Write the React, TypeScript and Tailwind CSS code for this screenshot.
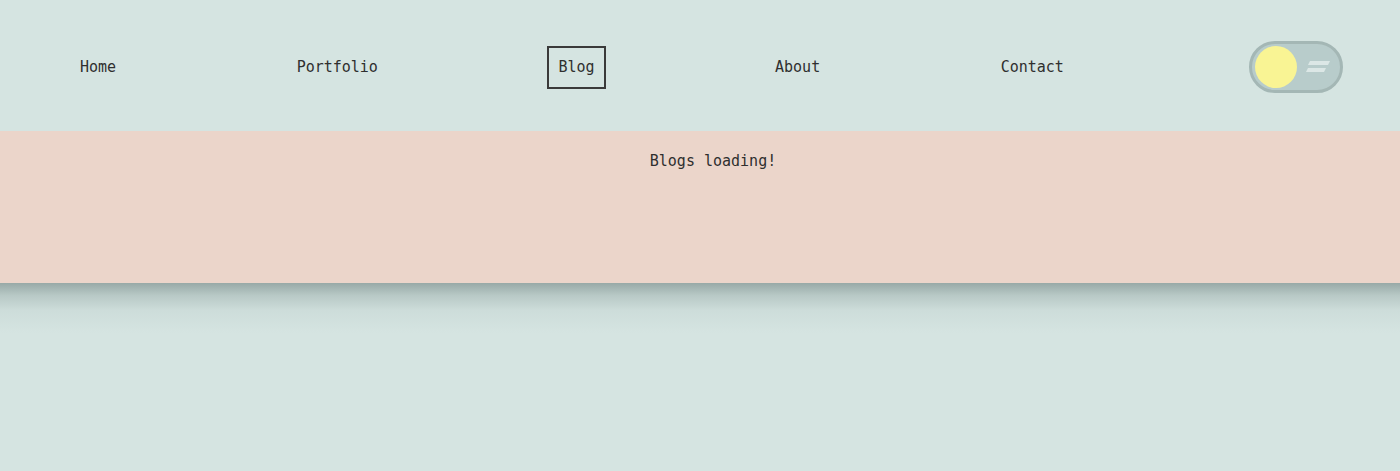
import React from "react";

const font = { fontFamily: '"DejaVu Sans Mono", "Liberation Mono", monospace' };

function Toggle() {
  return (
    <div className="ml-[5px] w-[94px] h-[52px] rounded-full border-[3px] border-[#a4b7b5] bg-[#b8cccb] flex items-center">
      <div className="ml-[3px] w-[42px] h-[42px] rounded-full bg-[#f9f494]" />
      <svg className="ml-[8px]" width="26" height="14" viewBox="0 0 26 14">
        <polygon points="5,1 25,1 23,5 3,5" fill="#dce7e6" />
        <polygon points="3,8 21,8 19,12 1,12" fill="#dce7e6" />
      </svg>
    </div>
  );
}

export default function App() {
  const items = ["Home", "Portfolio", "Blog", "About", "Contact"];
  return (
    <div className="min-h-[471px] bg-[#d5e4e1] text-[#2f2f2f] text-[15px]" style={font}>
      <nav className="h-[131px] flex items-center gap-[180.5px] pl-[80px] pt-[3px]">
        {items.map((it) =>
          it === "Blog" ? (
            <a key={it} className="mx-[-11px] px-[9px] py-[8px] leading-[23px] border-2 border-[#3a3a3a]">
              {it}
            </a>
          ) : (
            <a key={it} className="leading-[23px]">
              {it}
            </a>
          )
        )}
        <Toggle />
      </nav>
      <section className="relative h-[152px] bg-[#ebd5ca] flex justify-center pt-[19px] pl-[26px]">
        <p className="leading-[22px]">Blogs loading!</p>
        <div className="absolute left-0 right-0 top-full h-[50px] bg-[linear-gradient(to_bottom,rgba(110,130,128,0.6)_0%,rgba(130,150,148,0.35)_25%,rgba(160,180,178,0.15)_55%,rgba(213,228,225,0)_100%)]" />
      </section>
    </div>
  );
}
